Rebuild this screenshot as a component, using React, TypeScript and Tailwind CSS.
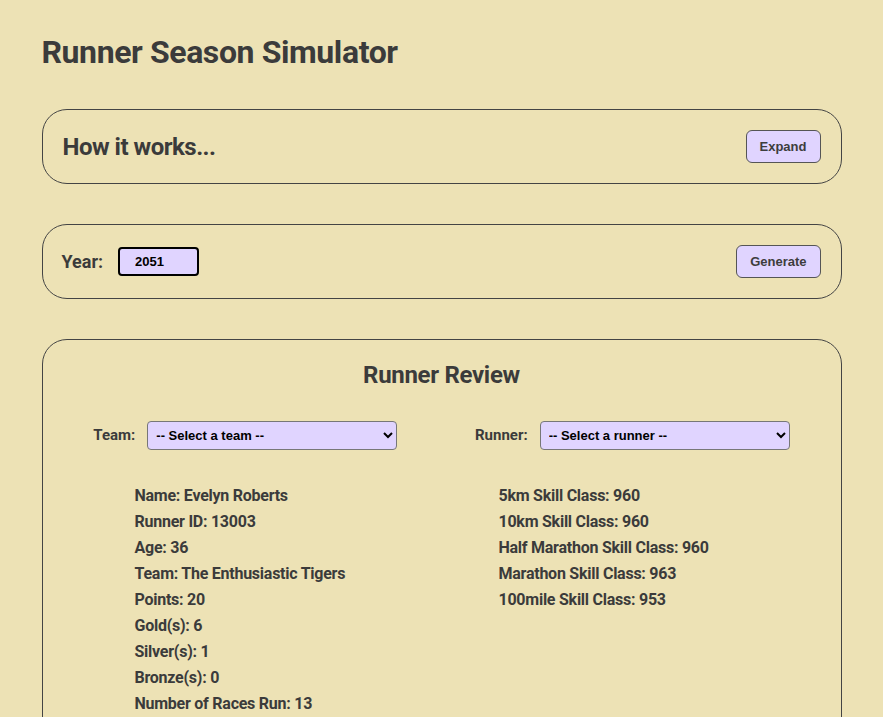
import React from "react";

const runner = [
  "Name: Evelyn Roberts",
  "Runner ID: 13003",
  "Age: 36",
  "Team: The Enthusiastic Tigers",
  "Points: 20",
  "Gold(s): 6",
  "Silver(s): 1",
  "Bronze(s): 0",
  "Number of Races Run: 13",
];

const skills = [
  "5km Skill Class: 960",
  "10km Skill Class: 960",
  "Half Marathon Skill Class: 960",
  "Marathon Skill Class: 963",
  "100mile Skill Class: 953",
];

const btn =
  "h-[33px] rounded-[6px] border border-[#555] bg-[#e0d4ff] px-[13px] text-[13px] font-bold text-[#3d3d3d] font-['Liberation_Sans',Arial,sans-serif]";

const sel =
  "h-[29px] w-[250px] rounded-[4px] border border-[#777] bg-[#e0d4ff] px-1 text-[13px] font-bold text-black font-['Liberation_Sans',Arial,sans-serif]";

export default function App() {
  return (
    <div className="min-h-screen bg-[#ede2b5] text-[#3b3b3b] font-['Roboto','Liberation_Sans',sans-serif]">
      <div className="mx-auto w-[800px] pb-10">
        <h1 className="pt-[33px] text-[32px] leading-[38px] font-bold tracking-[-0.4px]">
          Runner Season Simulator
        </h1>

        {/* how it works */}
        <section className="mt-[38px] flex h-[75px] items-center justify-between rounded-[25px] border border-[#444] pl-5 pr-5">
          <h2 className="text-[24px] leading-8 font-bold tracking-[-0.5px]">How it works...</h2>
          <button className={btn}>Expand</button>
        </section>

        {/* year */}
        <section className="mt-10 flex h-[75px] items-center justify-between rounded-[25px] border border-[#444] pl-[19px] pr-5">
          <div className="flex items-center gap-[15px]">
            <label className="text-[18px] font-bold">Year:</label>
            <input
              defaultValue="2051"
              className="h-[29px] w-[81px] rounded-[4px] border-2 border-black bg-[#e0d4ff] pl-[15px] text-[13px] font-bold text-black outline-none font-['Liberation_Sans',Arial,sans-serif]"
            />
          </div>
          <button className={btn}>Generate</button>
        </section>

        {/* review */}
        <section className="mt-10 rounded-[25px] border border-[#444] px-3 pt-[19px] pb-8">
          <h2 className="text-center text-[24px] leading-8 font-bold tracking-[-0.3px]">
            Runner Review
          </h2>

          <div className="mt-[30px] flex justify-around">
            <div className="flex items-center gap-3">
              <label className="text-[15px] font-bold">Team:</label>
              <select className={sel}>
                <option>-- Select a team --</option>
              </select>
            </div>
            <div className="flex items-center gap-3">
              <label className="text-[15px] font-bold">Runner:</label>
              <select className={sel}>
                <option>-- Select a runner --</option>
              </select>
            </div>
          </div>

          <div className="mt-[33px] grid grid-cols-[364px_1fr] pl-[80px] text-[16px] leading-[26px] font-bold tracking-[-0.25px]">
            <ul>
              {runner.map((r) => (
                <li key={r}>{r}</li>
              ))}
            </ul>
            <ul>
              {skills.map((s) => (
                <li key={s}>{s}</li>
              ))}
            </ul>
          </div>
        </section>
      </div>
    </div>
  );
}
